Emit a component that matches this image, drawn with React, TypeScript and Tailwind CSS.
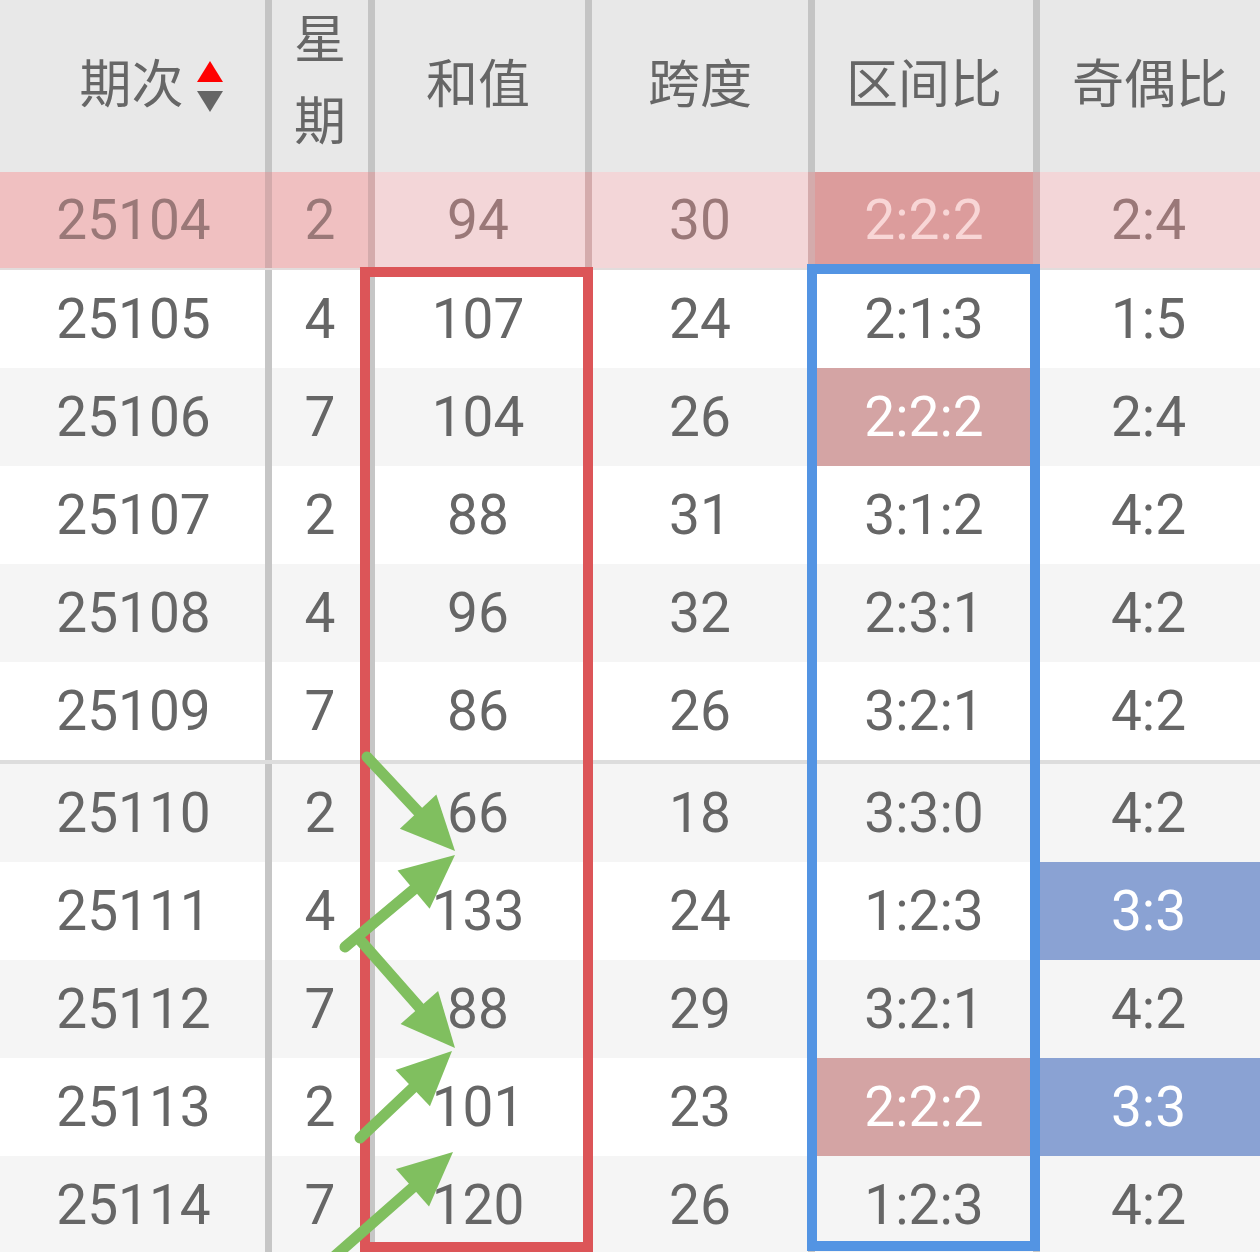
const ROWS = [
  ['25104', '2', '94', '30', '2:2:2', '2:4'],
  ['25105', '4', '107', '24', '2:1:3', '1:5'],
  ['25106', '7', '104', '26', '2:2:2', '2:4'],
  ['25107', '2', '88', '31', '3:1:2', '4:2'],
  ['25108', '4', '96', '32', '2:3:1', '4:2'],
  ['25109', '7', '86', '26', '3:2:1', '4:2'],
  ['25110', '2', '66', '18', '3:3:0', '4:2'],
  ['25111', '4', '133', '24', '1:2:3', '3:3'],
  ['25112', '7', '88', '29', '3:2:1', '4:2'],
  ['25113', '2', '101', '23', '2:2:2', '3:3'],
  ['25114', '7', '120', '26', '1:2:3', '4:2'],
]

const COLS = 'grid grid-cols-[272px_103px_217px_223px_225px_220px]'

// [startX, startY, tipX, tipY]
const ARROWS = [
  [367, 757, 455, 851],
  [345, 947, 455, 855],
  [360, 940, 455, 1048],
  [360, 1138, 452, 1051],
  [335, 1256, 453, 1152],
]

function Arrow({ a }: { a: number[] }) {
  const [sx, sy, tx, ty] = a
  const len = Math.hypot(tx - sx, ty - sy)
  const dx = (tx - sx) / len
  const dy = (ty - sy) / len
  const L = 54
  const W = 25
  const bx = tx - dx * L
  const by = ty - dy * L
  const pts = `${tx},${ty} ${bx - dy * W},${by + dx * W} ${bx + dy * W},${by - dx * W}`
  return (
    <g>
      <line x1={sx} y1={sy} x2={bx + dx * 4} y2={by + dy * 4} stroke="#80bf5f" strokeWidth="11" strokeLinecap="round" />
      <polygon points={pts} fill="#80bf5f" />
    </g>
  )
}

function SortIcon() {
  return (
    <svg width="28" height="54" viewBox="0 0 28 54" className="ml-[12px] mt-[4px]">
      <polygon points="14,0 27,21 1,21" fill="#ff0000" />
      <polygon points="1,30 27,30 14,51" fill="#666666" />
    </svg>
  )
}

export default function App() {
  return (
    <div className="relative w-[1260px] h-[1252px] overflow-hidden bg-white font-[Roboto,'Noto_Sans_CJK_SC',sans-serif] text-[#666]">
      {/* header */}
      <div className={`${COLS} h-[172px] bg-[#e8e8e8] text-[52px] leading-none`}>
        <div className="flex items-center justify-center pl-[38px] border-r-[7px] border-[#c4c4c4]">
          <span>期次</span>
          <SortIcon />
        </div>
        <div className="flex flex-col items-center justify-center gap-[30px] pb-[8px] border-r-[7px] border-[#c4c4c4]">
          <span>星</span>
          <span>期</span>
        </div>
        <div className="flex items-center justify-center pr-[4px] border-r-[7px] border-[#c4c4c4]">和值</div>
        <div className="flex items-center justify-center border-r-[7px] border-[#c4c4c4]">跨度</div>
        <div className="flex items-center justify-center border-r-[7px] border-[#c4c4c4]">区间比</div>
        <div className="flex items-center justify-center">奇偶比</div>
      </div>

      {/* rows */}
      {ROWS.map((r, i) => {
        const sel = i === 0
        const rowBg = sel ? 'bg-[#f3d6d8]' : i % 2 === 0 ? 'bg-[#f5f5f5]' : 'bg-white'
        const h = sel ? 'h-[98px] border-b-[2px] border-[#e2dcdc]' : i === 5 ? 'h-[102px] border-b-[4px] border-[#dddddd]' : 'h-[98px]'
        const sep = sel ? 'border-r-[7px] border-[#d4abac]' : 'border-r-[7px] border-[#c6c6c6]'
        const txt = sel ? 'text-[#9a7878]' : ''
        let zoneCls = ''
        if (sel) zoneCls = 'bg-[#dc9c9c] text-[#f8d6d6]'
        else if (r[4] === '2:2:2') zoneCls = 'bg-[#d4a4a4] text-white'
        const oddCls = r[5] === '3:3' ? 'bg-[#8aa2d3] text-white' : ''
        return (
          <div key={r[0]} className={`${COLS} ${h} ${rowBg} ${txt} text-[55px] leading-none`}>
            <div className={`flex items-center justify-center pl-[2px] ${sep} ${sel ? 'bg-[#f0c0c1]' : ''}`}>{r[0]}</div>
            <div className={`flex items-center justify-center ${sep} ${sel ? 'bg-[#f0c0c1]' : ''}`}>{r[1]}</div>
            <div className={`flex items-center justify-center pr-[4px] ${sep}`}>{r[2]}</div>
            <div className={`flex items-center justify-center ${sep}`}>{r[3]}</div>
            <div className={`flex items-center justify-center ${sep}`}>
              <div className={`w-full h-full flex items-center justify-center ${zoneCls}`}>{r[4]}</div>
            </div>
            <div className={`flex items-center justify-center pr-[3px] ${oddCls}`}>{r[5]}</div>
          </div>
        )
      })}

      {/* annotations */}
      <div className="absolute left-[360px] top-[267px] w-[233px] h-[985px] border-[10px] border-[#dc5558]" />
      <div className="absolute left-[807px] top-[264px] w-[233px] h-[987px] border-[10px] border-[#5394e3]" />
      <svg className="absolute left-0 top-0 pointer-events-none" width="1260" height="1252" viewBox="0 0 1260 1252">
        {ARROWS.map((a, i) => (
          <Arrow key={i} a={a} />
        ))}
      </svg>
    </div>
  )
}
